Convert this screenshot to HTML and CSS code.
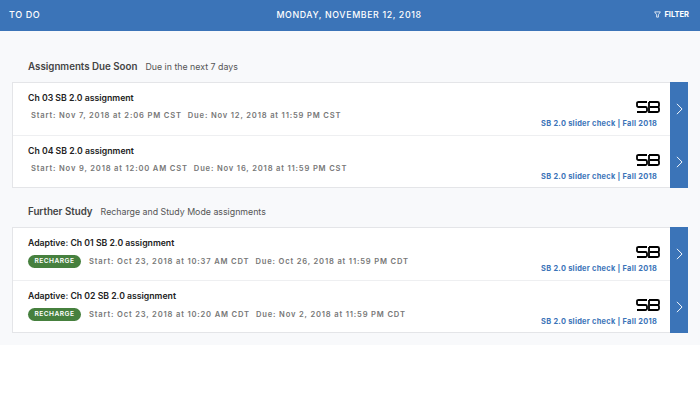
FILE: index.html
```html
<!DOCTYPE html>
<html lang="en">
<head>
<meta charset="utf-8">
<title>To Do</title>
<link rel="stylesheet" href="styles.css">
</head>
<body>
<svg class="defs" width="0" height="0" aria-hidden="true">
  <symbol id="sb" viewBox="0 0 24 12">
    <path d="M11 1H2.5Q1 1 1 2.2V4.6Q1 6 2.5 6H9.5Q11 6 11 7.4V9.8Q11 11 9.5 11H1M13 1H21.5Q23 1 23 2.2V4.6Q23 6 21.5 6H14M21.5 6Q23 6 23 7.4V9.8Q23 11 21.5 11H13V1" fill="none" stroke="#000" stroke-width="1.8"/>
  </symbol>
  <symbol id="chev" viewBox="0 0 8 14">
    <path d="M1 1L7 7L1 13" fill="none" stroke="#fff" stroke-width="1.1"/>
  </symbol>
</svg>
<header class="topbar">
  <div class="topbar-title">TO DO</div>
  <div class="topbar-date">MONDAY, NOVEMBER 12, 2018</div>
  <div class="topbar-filter">
    <svg class="filter-icon" viewBox="0 0 8 8"><path d="M.7 1H7.3L5 4.3V7H3V4.3Z" fill="none" stroke="#fff" stroke-width=".9"/></svg>
    <span>FILTER</span>
  </div>
</header>
<main class="content">
  <section class="group">
    <div class="group-head"><h2>Assignments Due Soon</h2><span>Due in the next 7 days</span></div>
    <div class="card">
      <article class="row">
        <div class="row-main">
          <h3>Ch 03 SB 2.0 assignment</h3>
          <div class="meta meta-plain"><span>Start: Nov 7, 2018 at 2:06 PM CST</span><span>Due: Nov 12, 2018 at 11:59 PM CST</span></div>
        </div>
        <div class="row-side"><svg class="logo"><use href="#sb"/></svg><a class="course">SB 2.0 slider check | Fall 2018</a></div>
        <div class="go"><svg class="chev"><use href="#chev"/></svg></div>
      </article>
      <article class="row">
        <div class="row-main">
          <h3>Ch 04 SB 2.0 assignment</h3>
          <div class="meta meta-plain"><span>Start: Nov 9, 2018 at 12:00 AM CST</span><span>Due: Nov 16, 2018 at 11:59 PM CST</span></div>
        </div>
        <div class="row-side"><svg class="logo"><use href="#sb"/></svg><a class="course">SB 2.0 slider check | Fall 2018</a></div>
        <div class="go"><svg class="chev"><use href="#chev"/></svg></div>
      </article>
    </div>
  </section>
  <section class="group">
    <div class="group-head"><h2>Further Study</h2><span>Recharge and Study Mode assignments</span></div>
    <div class="card">
      <article class="row">
        <div class="row-main">
          <h3>Adaptive: Ch 01 SB 2.0 assignment</h3>
          <div class="meta"><b class="pill">RECHARGE</b><span>Start: Oct 23, 2018 at 10:37 AM CDT</span><span>Due: Oct 26, 2018 at 11:59 PM CDT</span></div>
        </div>
        <div class="row-side"><svg class="logo"><use href="#sb"/></svg><a class="course">SB 2.0 slider check | Fall 2018</a></div>
        <div class="go"><svg class="chev"><use href="#chev"/></svg></div>
      </article>
      <article class="row">
        <div class="row-main">
          <h3>Adaptive: Ch 02 SB 2.0 assignment</h3>
          <div class="meta"><b class="pill">RECHARGE</b><span>Start: Oct 23, 2018 at 10:20 AM CDT</span><span>Due: Nov 2, 2018 at 11:59 PM CDT</span></div>
        </div>
        <div class="row-side"><svg class="logo"><use href="#sb"/></svg><a class="course">SB 2.0 slider check | Fall 2018</a></div>
        <div class="go"><svg class="chev"><use href="#chev"/></svg></div>
      </article>
    </div>
  </section>
</main>
</body>
</html>
```
FILE: styles.css
```css
* { box-sizing: border-box; }
html, body { margin: 0; padding: 0; background: #fff; }
body { font-family: "Inter", "Liberation Sans", sans-serif; color: #333; }
.defs { display: block; height: 0; }
.topbar {
  height: 31px;
  background: #3b74b8;
  color: #fff;
  display: grid;
  grid-template-columns: 1fr auto 1fr;
  align-items: center;
  padding: 0 11px 2px 9px;
}
.topbar-title { font-size: 9px; font-weight: 500; letter-spacing: .6px; }
.topbar-date { font-size: 8.8px; font-weight: 500; letter-spacing: .62px; }
.topbar-filter { justify-self: end; display: flex; align-items: center; gap: 3px; font-size: 7.5px; font-weight: 700; }
.filter-icon { width: 7px; height: 7px; }
.content { background: #f8f9fb; padding: 30px 12px 12px; }
.group { margin-bottom: 18px; }
.group:last-child { margin-bottom: 0; }
.group-head { display: flex; align-items: baseline; gap: 8px; padding-left: 16px; height: 21px; }
.group-head h2 { margin: 0; font-size: 9.75px; font-weight: 600; color: #444; }
.group-head span { font-size: 8.8px; color: #555; }
.card { background: #fff; border: 1px solid #e4e5e8; }
.row { height: 52px; display: flex; }
.row + .row { border-top: 1px solid #eeeff1; }
.row-main { flex: 1; padding: 9px 0 0 15px; }
.row-main h3 { margin: 0 0 6px; font-size: 8.7px; line-height: 12px; font-weight: 600; color: #222; }
.meta { display: flex; align-items: center; gap: 6px; font-size: 7.6px; line-height: 13px; color: #777; font-weight: 600; letter-spacing: .83px; }
.meta-plain { padding-left: 3px; margin-top: -1px; }
.pill { background: #46803e; color: #fff; border-radius: 7px; height: 13px; width: 53px; margin-right: 2px; font-size: 6.6px; font-weight: 600; text-align: center; letter-spacing: .5px; }
.row-side { display: flex; flex-direction: column; align-items: flex-end; padding: 18px 13px 0 0; }
.logo { width: 24px; height: 12px; margin-right: -3px; }
.course { margin-top: 5px; font-size: 7.4px; line-height: 11px; font-weight: 700; color: #3b74b8; letter-spacing: .28px; }
.go { width: 18px; background: #3b74b8; display: flex; align-items: center; justify-content: center; margin: -1px -1px -1px 0; }
.chev { width: 7px; height: 12px; }
```
